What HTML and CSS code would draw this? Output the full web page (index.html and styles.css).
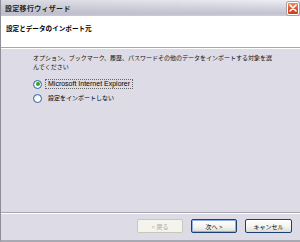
FILE: index.html
```html
<!DOCTYPE html>
<html lang="ja">
<head>
    <meta charset="UTF-8">
    <title>設定移行ウィザード</title>
    <link rel="stylesheet" href="styles.css">
</head>
<body>
    <div class="window">
        <div class="titlebar">
            <span class="title">設定移行ウィザード</span>
            <span class="close-btn">
                <svg width="8" height="8" viewBox="0 0 8 8">
                    <path d="M1 1 L7 7 M7 1 L1 7" stroke="#fff" stroke-width="1.6" stroke-linecap="round"/>
                </svg>
            </span>
        </div>

        <div class="header">
            <h1>設定とデータのインポート元</h1>
        </div>

        <div class="content">
            <p class="intro">オプション、ブックマーク、履歴、パスワードその他のデータをインポートする対象を選<br>んでください</p>

            <div class="options">
                <label class="option">
                    <span class="radio checked"></span>
                    <span class="option-text focus latin">Microsoft Internet Explorer</span>
                </label>
                <label class="option">
                    <span class="radio"></span>
                    <span class="option-text">設定をインポートしない</span>
                </label>
            </div>
        </div>

        <div class="footer">
            <button class="btn" disabled>&lt; 戻る</button>
            <button class="btn default">次へ &gt;</button>
            <button class="btn cancel">キャンセル</button>
        </div>
    </div>
</body>
</html>
```

FILE: styles.css
```css
body {
    margin: 0;
    font-family: "Liberation Sans", "Noto Sans CJK JP", sans-serif;
    font-size: 6px;
    color: #000;
}

.window {
    width: 300px;
    height: 242px;
    box-sizing: border-box;
    display: flex;
    flex-direction: column;
    background-color: #dddce6;
    border-left: 1px solid #8e8e9a;
    border-bottom: 2px solid #a9a9b4;
}

.titlebar {
    height: 16px;
    flex: none;
    display: flex;
    align-items: center;
    justify-content: space-between;
    padding: 0 1px 0 4px;
    background: linear-gradient(to right, rgba(180, 180, 192, 0.35), rgba(220, 222, 240, 0)),
                linear-gradient(to bottom, #eeeef4 0%, #d6d6e2 45%, #c2c2d2 85%, #d0d0dc 100%);
}

.title {
    font-size: 7px;
    font-weight: bold;
    letter-spacing: 0.3px;
    color: #222;
}

.close-btn {
    width: 12px;
    height: 13px;
    box-sizing: border-box;
    display: flex;
    align-items: center;
    justify-content: center;
    border: 1px solid #fff;
    border-radius: 2px;
    background: linear-gradient(to bottom, #ea8a68, #d9502a 60%, #c8401c);
    box-shadow: 0 0 0 1px #b0a0a0;
}

.header {
    height: 32px;
    flex: none;
    background-color: #fff;
    border-bottom: 1px solid #a6a6b0;
    box-shadow: 0 1px 0 #fff;
    padding: 8px 0 0 5px;
    box-sizing: border-box;
}

.header h1 {
    margin: 0;
    font-size: 6.6px;
    font-weight: bold;
    line-height: 9px;
}

.content {
    flex: 1;
    padding: 6px 0 0 32px;
}

.intro {
    margin: 0;
    line-height: 8.5px;
    color: #111;
}

.options {
    display: flex;
    flex-direction: column;
    margin-top: 6px;
}

.option {
    height: 14px;
    display: flex;
    align-items: center;
    gap: 4px;
}

.radio {
    width: 9px;
    height: 9px;
    box-sizing: border-box;
    border: 1px solid #2f64a8;
    border-radius: 50%;
    background: radial-gradient(circle at 65% 65%, #fff 30%, #dcdad2 100%);
    display: flex;
    align-items: center;
    justify-content: center;
}

.radio.checked::after {
    content: "";
    width: 4px;
    height: 4px;
    border-radius: 50%;
    background-color: #2aa82a;
}

.option-text {
    padding: 0 2px;
    line-height: 8px;
}

.latin {
    font-size: 7px;
}

.focus {
    outline: 1px dotted #666;
}

.footer {
    height: 28px;
    flex: none;
    display: flex;
    justify-content: flex-end;
    align-items: flex-start;
    gap: 8px;
    padding: 6px 8px 0 0;
    box-sizing: border-box;
    border-top: 1px solid #a6a6b0;
    box-shadow: inset 0 1px 0 #fff;
}

.btn {
    width: 46px;
    height: 14px;
    padding: 0;
    font-family: inherit;
    font-size: 6px;
    border: 1px solid #1c3f73;
    border-radius: 2px;
    background: linear-gradient(to bottom, #fff 0%, #f2f2ee 60%, #dcdcd4 100%);
    color: #000;
}

.btn.default {
    box-shadow: inset 0 0 0 1px #8fb1e6;
}

.btn:disabled {
    border-color: #c9c7ba;
    background: #f4f3ee;
    color: #aca899;
}

.btn.cancel {
    width: 47px;
}
```
